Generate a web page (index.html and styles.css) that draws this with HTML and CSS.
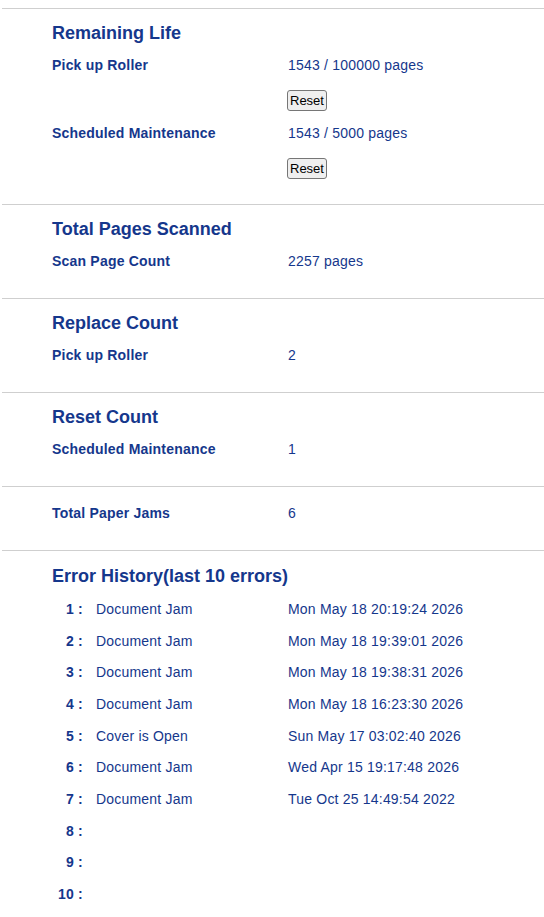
FILE: index.html
```html
<!DOCTYPE html>
<html lang="en">
<head>
  <meta charset="UTF-8">
  <title>Maintenance</title>
  <link rel="stylesheet" href="styles.css">
</head>
<body>

<div class="section">
  <h2>Remaining Life</h2>
  <div class="row">
    <span class="label">Pick up Roller</span>
    <span class="value">1543 / 100000 pages</span>
  </div>
  <div class="row">
    <span class="label"></span>
    <span class="value"><button class="btn">Reset</button></span>
  </div>
  <div class="row">
    <span class="label">Scheduled Maintenance</span>
    <span class="value">1543 / 5000 pages</span>
  </div>
  <div class="row">
    <span class="label"></span>
    <span class="value"><button class="btn">Reset</button></span>
  </div>
</div>

<div class="section">
  <h2>Total Pages Scanned</h2>
  <div class="row">
    <span class="label">Scan Page Count</span>
    <span class="value">2257 pages</span>
  </div>
</div>

<div class="section">
  <h2>Replace Count</h2>
  <div class="row">
    <span class="label">Pick up Roller</span>
    <span class="value">2</span>
  </div>
</div>

<div class="section">
  <h2>Reset Count</h2>
  <div class="row">
    <span class="label">Scheduled Maintenance</span>
    <span class="value">1</span>
  </div>
</div>

<div class="section">
  <div class="row">
    <span class="label">Total Paper Jams</span>
    <span class="value">6</span>
  </div>
</div>

<div class="section last">
  <h2>Error History(last 10 errors)</h2>
  <div class="errors" id="errors"></div>
</div>

<script>
  const errors = [
    ["Document Jam", "Mon May 18 20:19:24 2026"],
    ["Document Jam", "Mon May 18 19:39:01 2026"],
    ["Document Jam", "Mon May 18 19:38:31 2026"],
    ["Document Jam", "Mon May 18 16:23:30 2026"],
    ["Cover is Open", "Sun May 17 03:02:40 2026"],
    ["Document Jam", "Wed Apr 15 19:17:48 2026"],
    ["Document Jam", "Tue Oct 25 14:49:54 2022"],
  ];

  const list = document.getElementById('errors');
  for (let i = 0; i < 10; i++) {
    const e = errors[i] || ["", ""];
    const row = document.createElement('div');
    row.className = 'err';
    row.innerHTML = `<span class="num">${i + 1} :</span><span>${e[0]}</span><span>${e[1]}</span>`;
    list.appendChild(row);
  }
</script>

</body>
</html>
```

FILE: styles.css
```css
body {
  font-family: "Liberation Sans", Arial, sans-serif;
  font-size: 14px;
  letter-spacing: 0.2px;
  color: #15378c;
  background: #fff;
  margin: 8px 0 0 2px;
}

.section {
  border-top: 1px solid #cfcfcf;
  padding: 9px 0 20px 50px;
}

.section.last {
  padding-top: 10px;
  padding-bottom: 0;
}

h2 {
  font-size: 18px;
  font-weight: bold;
  letter-spacing: 0;
  line-height: 30px;
  height: 30px;
  margin: 0;
}

.row {
  display: grid;
  grid-template-columns: 236px 1fr;
  height: 34px;
  align-items: center;
}

.label {
  font-weight: bold;
}

.btn {
  font-family: "Liberation Sans", Arial, sans-serif;
  font-size: 13px;
  letter-spacing: 0;
  line-height: 15px;
  color: #000;
  background: #efefef;
  border: 1px solid #767676;
  border-radius: 3px;
  padding: 2px 2px;
  margin-top: 3px;
  margin-left: -1px;
}

.errors {
  margin-top: 2px;
}

.err {
  display: grid;
  grid-template-columns: 44px 192px 1fr;
  height: 31.7px;
  align-items: center;
}

.num {
  font-weight: bold;
  text-align: right;
  padding-right: 13px;
}
```
